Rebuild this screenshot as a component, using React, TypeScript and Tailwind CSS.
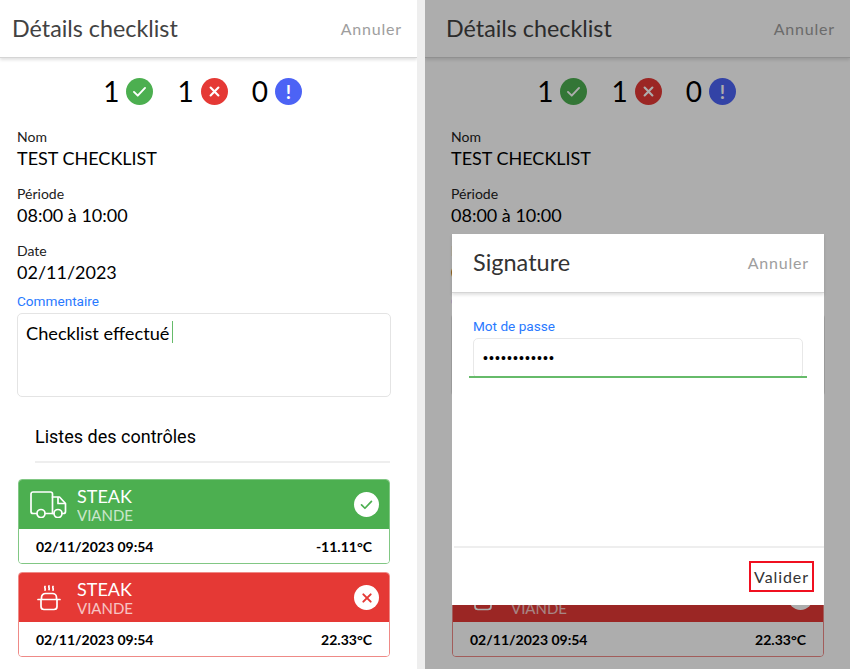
import type { ReactNode } from "react";

function CheckMark({ className }: { className?: string }) {
  return (
    <svg viewBox="0 0 24 24" fill="none" stroke="currentColor" strokeWidth="2.4" strokeLinecap="round" strokeLinejoin="round" className={className}>
      <path d="M5 12.5l4.8 4.8L19 7.5" />
    </svg>
  );
}

function CrossMark({ className }: { className?: string }) {
  return (
    <svg viewBox="0 0 24 24" fill="none" stroke="currentColor" strokeWidth="3" strokeLinecap="round" className={className}>
      <path d="M6.5 6.5l11 11M17.5 6.5l-11 11" />
    </svg>
  );
}

function TruckIcon() {
  return (
    <svg viewBox="0 0 37 27" fill="none" stroke="currentColor" strokeWidth="1.7" strokeLinecap="round" strokeLinejoin="round" className="h-[27px] w-[37px] text-white">
      <path d="M6.5 22.5H3a2 2 0 0 1-2-2V3a2 2 0 0 1 2-2h17.5a2 2 0 0 1 2 2v19.5H15.5" />
      <path d="M22.5 6h7l6 6.5v8a2 2 0 0 1-2 2h-1.5M22.5 22.5h1" />
      <path d="M28 6.5v6h7" />
      <circle cx="11" cy="22.5" r="4" />
      <circle cx="28" cy="22.5" r="4" />
    </svg>
  );
}

function PotIcon() {
  return (
    <svg viewBox="0 0 24 26" fill="none" stroke="currentColor" strokeWidth="1.7" strokeLinecap="round" strokeLinejoin="round" className="h-[26px] w-6 text-white">
      <path d="M8 1.5c-.8 1.2.8 2 0 3.6M12 1c-.8 1.2.8 2 0 3.6M16 1.5c-.8 1.2.8 2 0 3.6" />
      <path d="M4.5 14v-1.5a4 4 0 0 1 4-4h7a4 4 0 0 1 4 4V14" />
      <path d="M1 14.5h22" />
      <path d="M4 14.5v7a3 3 0 0 0 3 3h10a3 3 0 0 0 3-3v-7" />
    </svg>
  );
}

function Counter({ value, children, className }: { value: number; children: ReactNode; className: string }) {
  return (
    <div className="flex items-center gap-[7px]">
      <span className="text-[28px] leading-none text-black">{value}</span>
      <span className={`flex h-[27px] w-[27px] items-center justify-center rounded-full text-white ${className}`}>{children}</span>
    </div>
  );
}

function Field({ label, value, className }: { label: string; value: string; className: string }) {
  return (
    <div className={className}>
      <div className="text-[14px] leading-[18px] text-[#212121]">{label}</div>
      <div className="text-[18px] leading-[24px] text-black">{value}</div>
    </div>
  );
}

function ControlCard({ temp, ok, icon }: { temp: string; ok: boolean; icon: ReactNode }) {
  return (
    <div className={`overflow-hidden rounded-[4px] border ${ok ? "border-[#81c784]" : "border-[#ef8a87]"}`}>
      <div className={`flex h-[49px] items-center pr-[10px] ${ok ? "bg-[#4caf50]" : "bg-[#e53935]"}`}>
        <div className="flex w-[58px] justify-center pl-[1px]">{icon}</div>
        <div className="flex-1 text-white">
          <div className="text-[18px] leading-[20px]">STEAK</div>
          <div className="text-[15px] leading-[18px] opacity-70">VIANDE</div>
        </div>
        <span className={`flex h-[25px] w-[25px] items-center justify-center rounded-full bg-white ${ok ? "text-[#4caf50]" : "text-[#e53935]"}`}>
          {ok ? <CheckMark className="h-[17px] w-[17px]" /> : <CrossMark className="h-[16px] w-[16px]" />}
        </span>
      </div>
      <div className="flex h-[34px] items-center justify-between bg-white px-[17px] text-[14px] font-bold text-black">
        <span>02/11/2023 09:54</span>
        <span>{temp}</span>
      </div>
    </div>
  );
}

function ChecklistScreen({ inset = false }: { inset?: boolean }) {
  return (
    <div className="h-[669px] overflow-hidden font-[Lato,sans-serif]">
      <header className={`flex h-[58px] items-center justify-between border-b border-[#d5d5d5] pr-[15px] shadow-[0_2px_3px_rgba(0,0,0,0.12)] ${inset ? "pl-[21px]" : "pl-3"}`}>
        <h1 className="text-[23.3px] leading-none text-[#424242]">Détails checklist</h1>
        <button type="button" className="text-[16px] tracking-[0.8px] text-[#9e9e9e]">Annuler</button>
      </header>

      <div className={`w-[416px] ${inset ? "ml-[9px]" : ""}`}>
        <div className="flex items-center justify-center gap-[24px] pr-[11px] pt-[19px]">
          <Counter value={1} className="bg-[#4caf50]"><CheckMark className="h-[19px] w-[19px]" /></Counter>
          <Counter value={1} className="bg-[#e53935]"><CrossMark className="h-[17px] w-[17px]" /></Counter>
          <Counter value={0} className="bg-[#4c63f5]"><span className="text-[19px] font-bold leading-none">!</span></Counter>
        </div>

        <div className="px-[17px] pt-[23px]">
          <Field label="Nom" value="TEST CHECKLIST" className="h-[57px]" />
          <Field label="Période" value="08:00 à 10:00" className="h-[57px]" />
          <Field label="Date" value="02/11/2023" className="h-[50px]" />
          <div className="font-[Roboto,sans-serif] text-[13.6px] leading-[18px] text-[#2979ff]">Commentaire</div>
          <div className="mr-[8px] mt-[3px] flex h-[84px] items-start rounded-[5px] border border-[#e4e4e4] px-[8px] pt-[7px] text-[18.2px] leading-[24px] text-black">
            Checklist effectué
            <span className="ml-[3px] h-[22px] w-px bg-[#66bb6a]" />
          </div>
        </div>

        <div className="ml-[35px] mr-[26px] mt-[28px] border-b-2 border-[#eeeeee] pb-[12px] font-[Roboto,sans-serif] text-[18px] leading-[24px] text-black">
          Listes des contrôles
        </div>

        <div className="ml-[18px] mr-[26px] mt-[16px] flex flex-col gap-[8px]">
          <ControlCard temp="-11.11°C" ok icon={<TruckIcon />} />
          <ControlCard temp="22.33°C" ok={false} icon={<PotIcon />} />
        </div>
      </div>
    </div>
  );
}

function SignatureDialog() {
  return (
    <div className="absolute left-[27px] top-[234px] flex h-[371px] w-[372px] flex-col bg-white font-[Lato,sans-serif]">
      <div className="flex h-[59px] items-center justify-between border-b border-[#d5d5d5] pl-[21px] pr-[15px] shadow-[0_2px_3px_rgba(0,0,0,0.12)]">
        <h2 className="text-[23.5px] leading-none text-[#333]">Signature</h2>
        <button type="button" className="text-[16px] tracking-[0.8px] text-[#9e9e9e]">Annuler</button>
      </div>
      <div className="flex-1 px-[21px] pt-[24px]">
        <div className="font-[Roboto,sans-serif] text-[13.6px] leading-[18px] text-[#2979ff]">Mot de passe</div>
        <div className="relative mt-[3px] flex h-[40px] items-center rounded-[5px] border border-[#e8e8e8] px-[9px]">
          <span className="font-[Liberation_Sans,sans-serif] text-[14px] leading-none tracking-[1.1px] text-black">••••••••••••</span>
          <span className="absolute -left-[5px] -right-[5px] bottom-[-1px] h-[2px] bg-[#66bb6a]" />
        </div>
      </div>
      <div className="ml-[2px] flex h-[59px] items-center justify-end border-t-2 border-[#eeeeee] pr-[10px]">
        <button type="button" className="flex h-[31px] w-[65px] items-center justify-center border-2 border-[#f01020] text-[16px] tracking-[0.9px] text-[#333]">
          Valider
        </button>
      </div>
    </div>
  );
}

export default function App() {
  return (
    <div className="flex h-[669px] w-[850px] overflow-hidden bg-[#eeeeee]">
      <div className="w-[417px] bg-white">
        <ChecklistScreen />
      </div>
      <div className="relative ml-[8px] w-[425px] bg-white">
        <ChecklistScreen inset />
        <div className="absolute inset-0 bg-black/32" />
        <SignatureDialog />
      </div>
    </div>
  );
}
